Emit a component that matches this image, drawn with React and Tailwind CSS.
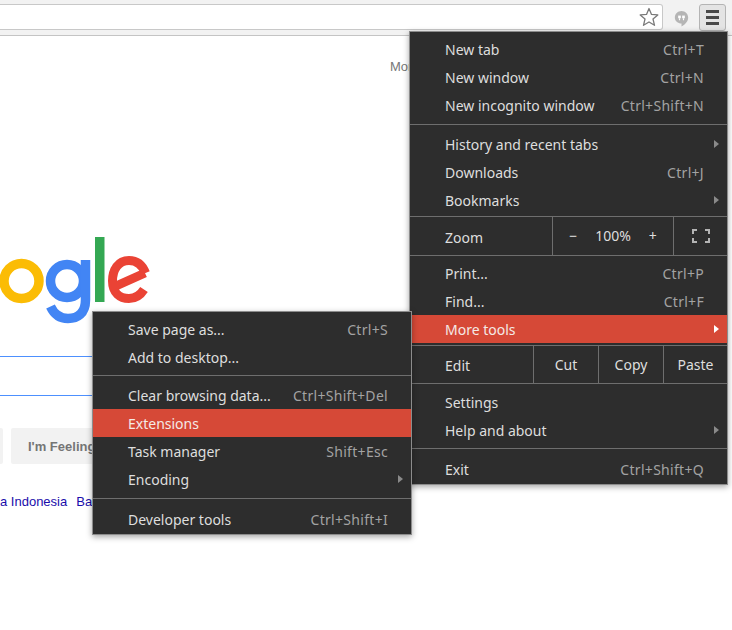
const font = { fontFamily: '"Noto Sans", "Open Sans", sans-serif' };

function Arrow({ hot }) {
  return (
    <svg width="5" height="8" viewBox="0 0 5 8" className="absolute right-[8px] top-[10px]">
      <path d="M0 0L5 4L0 8Z" fill={hot ? "#ffffff" : "#8a8a8a"} />
    </svg>
  );
}

function Row({ label, sc, arrow, hot }) {
  return (
    <div className={`relative flex h-[28px] items-center justify-between pl-[35px] pr-[23px] ${hot ? "bg-[#d64937] text-[#f4e9e6]" : ""}`}>
      <span>{label}</span>
      {sc && <span className="tracking-[0.3px] text-[#a3a3a3]">{sc}</span>}
      {arrow && <Arrow hot={hot} />}
    </div>
  );
}

function Sep({ cls }) {
  return <div className={`h-px bg-[#6e6e6e] ${cls}`} />;
}

function Cell({ children, cls }) {
  return <div className={`flex h-full items-center justify-center border-l border-[#6e6e6e] ${cls}`}>{children}</div>;
}

function Logo() {
  return (
    <svg width="150" height="90" viewBox="0 0 150 90" className="block">
      <circle cx="21.5" cy="44" r="17.5" fill="none" stroke="#fbbc05" strokeWidth="9.5" />
      <circle cx="67" cy="44" r="16.5" fill="none" stroke="#4285f4" strokeWidth="9.5" />
      <path d="M85.5 23V63C85.5 77 77 81.5 68 81.5C60 81.5 54 77 50.5 69.5" fill="none" stroke="#4285f4" strokeWidth="9.5" />
      <rect x="95" y="0" width="9.5" height="65" fill="#34a853" />
      <path d="M145 36L116 49M145.5 36C142 27 136 23.5 129 23.5C118 23.5 112.5 33 112.5 44C112.5 56 120 61.5 129 61.5C136 61.5 140.5 58 144 52.5" fill="none" stroke="#ea4335" strokeWidth="9" />
    </svg>
  );
}

export default function App() {
  return (
    <div className="relative h-[630px] w-[732px] overflow-hidden bg-white">
      <div className="flex h-[36px] items-start border-b border-[#c4c4c4] bg-[#f2f2f2]">
        <div className="mt-[4px] flex h-[26px] w-[663px] items-center justify-end rounded-r-[3px] border border-l-0 border-[#c8c8c8] bg-white pr-[3px]">
          <svg width="20" height="20" viewBox="0 0 20 20">
            <path d="M10 1.5L12.5 7.4L18.8 7.9L14 12L15.5 18.3L10 15L4.5 18.3L6 12L1.2 7.9L7.5 7.4Z" fill="#fff" stroke="#7a7a7a" strokeWidth="1.3" strokeLinejoin="round" />
          </svg>
        </div>
        <svg width="15" height="19" viewBox="0 0 18 20" className="ml-[11px] mt-[9px]">
          <path d="M9 1C4.6 1 1 4.5 1 8.8C1 13 4.6 16 9 16V19.5C13 17.5 17 13.7 17 8.8C17 4.5 13.4 1 9 1Z" fill="#b5b5b5" />
          <rect x="5" y="6.5" width="3.2" height="3.2" fill="#fff" />
          <rect x="9.8" y="6.5" width="3.2" height="3.2" fill="#fff" />
          <path d="M6.6 9.7V12M11.4 9.7V12" stroke="#fff" strokeWidth="1.4" />
        </svg>
        <div className="ml-[10px] mt-[4px] flex h-[27px] w-[27px] flex-col items-center justify-center gap-[3px] rounded-[3px] border border-[#b4b4b4] bg-[#e4e4e4]">
          <div className="h-[3px] w-[13px] bg-[#4a4a4a]" />
          <div className="h-[3px] w-[13px] bg-[#4a4a4a]" />
          <div className="h-[3px] w-[13px] bg-[#4a4a4a]" />
        </div>
      </div>

      <div style={{ fontFamily: '"Liberation Sans", Arial, sans-serif' }}>
        <div className="mt-[23px] pl-[390px] text-[13px] leading-[15px] text-[#777777]">More</div>
        <div className="mt-[163px]"><Logo /></div>
        <div className="mt-[29px] h-[40px] w-[100px] border-y border-[#4d90fe]" />
        <div className="mt-[32px] flex h-[36px] gap-[8px] text-[13px] font-bold text-[#757575]">
          <div className="w-[3px] rounded-r-[2px] bg-[#f2f2f2]" />
          <div className="flex w-[100px] items-center rounded-[2px] bg-[#f2f2f2] pl-[17px] pt-[2px] whitespace-nowrap">I'm Feeling Lucky</div>
        </div>
        <div className="mt-[30px] flex gap-[9px] text-[13px] leading-[15px] text-[#1a0dab]">
          <span>a Indonesia</span>
          <span>Bahasa</span>
        </div>
      </div>

      <div style={font} className="absolute left-[409px] top-[31px] w-[319px] border border-[#8c8c8c] bg-[#2d2d2d] pb-[1px] pt-[3px] text-[14px] text-[#dedede] shadow-[0_2px_6px_rgba(0,0,0,0.35)]">
        <Row label="New tab" sc="Ctrl+T" />
        <Row label="New window" sc="Ctrl+N" />
        <Row label="New incognito window" sc="Ctrl+Shift+N" />
        <Sep cls="mb-[5px] mt-[5px]" />
        <Row label="History and recent tabs" arrow />
        <Row label="Downloads" sc="Ctrl+J" />
        <Row label="Bookmarks" arrow />
        <div className="mt-[2px] flex h-[40px] items-center border-y border-[#6e6e6e]">
          <div className="w-[142px] pl-[35px] pt-[2px]">Zoom</div>
          <Cell cls="w-[121px] gap-[18px] pb-[1px]"><span>−</span><span>100%</span><span>+</span></Cell>
          <Cell cls="flex-1">
            <svg width="18" height="14" viewBox="0 0 18 14" fill="none" stroke="#b4b4b4" strokeWidth="2">
              <path d="M1 5V1H5M13 1H17V5M17 9V13H13M5 13H1V9" />
            </svg>
          </Cell>
        </div>
        <div className="mt-[3px]">
          <Row label="Print..." sc="Ctrl+P" />
          <Row label="Find..." sc="Ctrl+F" />
          <Row label="More tools" arrow hot />
        </div>
        <div className="mt-[2px] flex h-[39px] items-center border-y border-[#6e6e6e]">
          <div className="w-[123px] pl-[35px] pt-[2px]">Edit</div>
          <Cell cls="w-[65px] pb-[1px]">Cut</Cell>
          <Cell cls="w-[65px] pb-[1px]">Copy</Cell>
          <Cell cls="flex-1 pb-[1px]">Paste</Cell>
        </div>
        <div className="mt-[4px]">
          <Row label="Settings" />
          <Row label="Help and about" arrow />
        </div>
        <Sep cls="mb-[6px] mt-[4px]" />
        <Row label="Exit" sc="Ctrl+Shift+Q" />
      </div>

      <div style={font} className="absolute left-[92px] top-[311px] w-[320px] border border-[#8c8c8c] bg-[#2d2d2d] pb-[1px] pt-[3px] text-[14px] text-[#dedede] shadow-[0_2px_6px_rgba(0,0,0,0.35)]">
        <Row label="Save page as..." sc="Ctrl+S" />
        <Row label="Add to desktop..." />
        <Sep cls="mb-[5px] mt-[4px]" />
        <Row label="Clear browsing data..." sc="Ctrl+Shift+Del" />
        <Row label="Extensions" hot />
        <Row label="Task manager" sc="Shift+Esc" />
        <Row label="Encoding" arrow />
        <Sep cls="mb-[6px] mt-[5px]" />
        <Row label="Developer tools" sc="Ctrl+Shift+I" />
      </div>
    </div>
  );
}
